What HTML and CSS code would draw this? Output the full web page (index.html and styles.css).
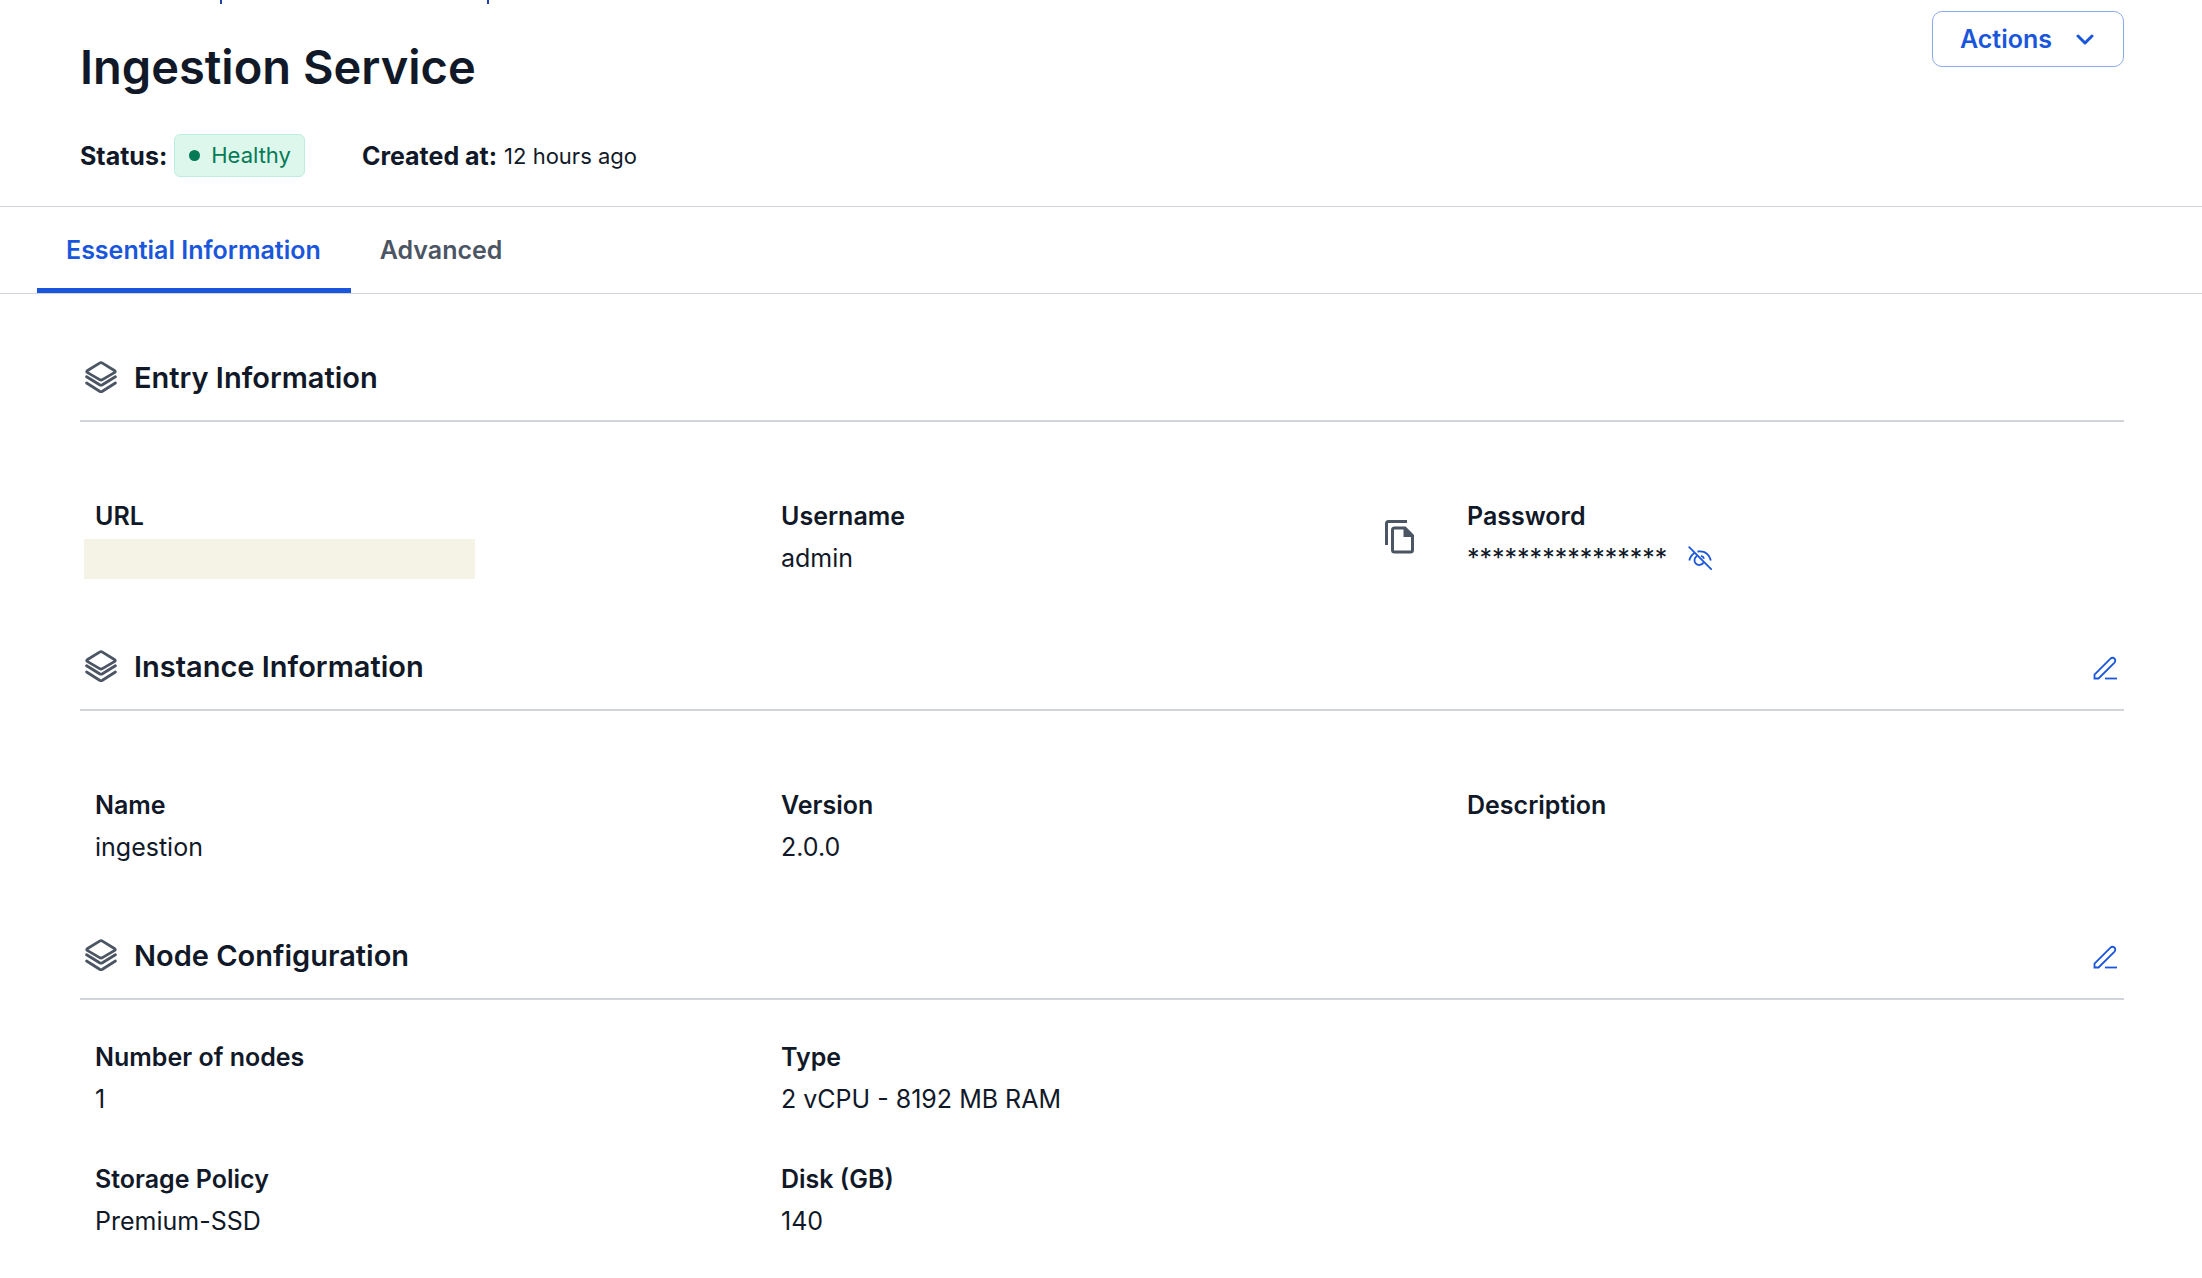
FILE: index.html
```html
<!DOCTYPE html>
<html lang="en">
<head>
    <meta charset="UTF-8">
    <meta name="viewport" content="width=device-width, initial-scale=1.0">
    <title>Ingestion Service</title>
    <link rel="stylesheet" href="styles.css">
</head>
<body>
    <!-- Shared icon shapes -->
    <svg class="icon-defs" aria-hidden="true">
        <symbol id="icon-layers" viewBox="0 0 32 34" fill="none" stroke="currentColor" stroke-width="2.8" stroke-linecap="round" stroke-linejoin="round">
            <path d="M14.6 2.1 2.2 9.8q-1 .8 0 1.6l12.4 7.2q1.4.8 2.8 0l12.4-7.2q1-.8 0-1.6L17.4 2.1q-1.4-.8-2.8 0Z"/>
            <path d="m1.6 15.8 13 8q1.400.8 2.800 0l13-8"/>
            <path d="m1.6 22 13 8.300q1.400.8 2.800 0l13-8.300"/>
        </symbol>
        <symbol id="icon-edit" viewBox="0 0 24 24" fill="none" stroke="currentColor" stroke-width="1.8">
            <path d="M1.5 22.5V18.5L17.5 2.6q2-1.800 4 0 1.600 2 0 4L5.500 22.500Z"/>
            <path d="M12 22.5h12"/>
        </symbol>
    </svg>

    <header class="page-header">
        <nav class="breadcrumb" aria-label="Breadcrumb">
            <span class="crumb-mark"></span>
            <span class="crumb-mark"></span>
        </nav>
        <div class="title-row">
            <h1>Ingestion Service</h1>
            <button type="button" class="actions-btn">
                Actions
                <svg width="18" height="11" viewBox="0 0 18 11" fill="none" stroke="currentColor" stroke-width="3" stroke-linecap="round" stroke-linejoin="round"><path d="m2 2 7 7 7-7"/></svg>
            </button>
        </div>
        <div class="meta-row">
            <div class="meta">
                <strong>Status:</strong>
                <span class="badge"><span class="dot"></span>Healthy</span>
            </div>
            <div class="meta">
                <strong>Created at:</strong>
                <span>12 hours ago</span>
            </div>
        </div>
    </header>

    <nav class="tabs">
        <a href="#essential" class="tab active">Essential Information</a>
        <a href="#advanced" class="tab">Advanced</a>
    </nav>

    <main id="essential">
        <section>
            <div class="section-header">
                <svg class="layers"><use href="#icon-layers"/></svg>
                <h2>Entry Information</h2>
            </div>
            <dl class="fields">
                <div class="field">
                    <dt>URL</dt>
                    <dd class="redacted"></dd>
                </div>
                <div class="field with-copy">
                    <div>
                        <dt>Username</dt>
                        <dd>admin</dd>
                    </div>
                    <button type="button" class="icon-btn copy-btn" aria-label="Copy username">
                        <svg width="30" height="34" viewBox="0 0 30 34" fill="none" stroke="currentColor" stroke-width="3"><path d="M1.5 25V3.5q0-2 2-2H22"/><path d="M9.5 8H20l7.5 7.5V30q0 2-2 2h-16q-2 0-2-2V10q0-2 2-2Z"/><path d="M18.5 8v9H28L19 8Z" fill="currentColor" stroke="none"/></svg>
                    </button>
                </div>
                <div class="field">
                    <dt>Password</dt>
                    <dd class="password">
                        ****************
                        <button type="button" class="icon-btn" aria-label="Show password">
                            <svg width="24" height="24" viewBox="0 0 24 24" fill="none" stroke="currentColor" stroke-width="1.8"><path d="m.7.7 23 23"/><path d="M1.300 14.500Q2.500 9.500 6.500 7"/><path d="M9.500 5.500Q20 4 22.900 14.500"/><path d="M9 10a4.800 4.800 0 1 0 6.500 6.500"/><path d="M13 9.800q2.500.6 3 3"/></svg>
                        </button>
                    </dd>
                </div>
            </dl>
        </section>

        <section>
            <div class="section-header">
                <svg class="layers"><use href="#icon-layers"/></svg>
                <h2>Instance Information</h2>
                <button type="button" class="icon-btn edit-btn" aria-label="Edit instance information">
                    <svg width="24" height="24"><use href="#icon-edit"/></svg>
                </button>
            </div>
            <dl class="fields">
                <div class="field">
                    <dt>Name</dt>
                    <dd>ingestion</dd>
                </div>
                <div class="field">
                    <dt>Version</dt>
                    <dd>2.0.0</dd>
                </div>
                <div class="field">
                    <dt>Description</dt>
                    <dd></dd>
                </div>
            </dl>
        </section>

        <section>
            <div class="section-header">
                <svg class="layers"><use href="#icon-layers"/></svg>
                <h2>Node Configuration</h2>
                <button type="button" class="icon-btn edit-btn" aria-label="Edit node configuration">
                    <svg width="24" height="24"><use href="#icon-edit"/></svg>
                </button>
            </div>
            <dl class="fields compact">
                <div class="field">
                    <dt>Number of nodes</dt>
                    <dd>1</dd>
                </div>
                <div class="field">
                    <dt>Type</dt>
                    <dd>2 vCPU - 8192 MB RAM</dd>
                </div>
                <div class="field new-row">
                    <dt>Storage Policy</dt>
                    <dd>Premium-SSD</dd>
                </div>
                <div class="field">
                    <dt>Disk (GB)</dt>
                    <dd>140</dd>
                </div>
            </dl>
        </section>
    </main>
</body>
</html>
```
FILE: styles.css
```css
* {
    box-sizing: border-box;
}
body {
    margin: 0;
    font-family: Inter, sans-serif;
    font-size: 25px;
    line-height: 42px;
    color: #111928;
    background-color: #fff;
}
h1, h2, dl, dd {
    margin: 0;
}
button {
    font-family: inherit;
    cursor: pointer;
}
svg {
    display: block;
    flex: none;
}
.icon-defs {
    position: absolute;
    width: 0;
    height: 0;
}
.page-header {
    padding: 0 78px 29px 80px;
    border-bottom: 1px solid #d1d5db;
}
.breadcrumb {
    display: flex;
    gap: 265px;
    height: 11px;
    padding-left: 140px;
}
.crumb-mark {
    width: 2px;
    height: 4px;
    background-color: #1e429f;
}
.title-row {
    display: flex;
    justify-content: space-between;
    align-items: flex-start;
}
h1 {
    padding-top: 24px;
    font-size: 47px;
    line-height: 64px;
    font-weight: 600;
}
.actions-btn {
    display: flex;
    align-items: center;
    gap: 24px;
    height: 56px;
    padding: 0 29px 0 27px;
    font-size: 25px;
    font-weight: 600;
    color: #1a56db;
    background-color: #fff;
    border: 1px solid #8daaed;
    border-radius: 10px;
}
.meta-row {
    display: flex;
    gap: 57px;
    padding-top: 35px;
}
.meta {
    display: flex;
    align-items: center;
    gap: 7px;
    font-size: 22px;
}
.meta strong {
    font-size: 25px;
    font-weight: 700;
}
.badge {
    display: flex;
    align-items: center;
    gap: 11px;
    padding: 0 13px 0 14px;
    line-height: 41px;
    color: #057a55;
    background-color: #def7ec;
    border: 1px solid #bcf0da;
    border-radius: 6px;
}
.dot {
    width: 11px;
    height: 11px;
    border-radius: 50%;
    background-color: #057a55;
}
.tabs {
    display: flex;
    padding-left: 37px;
    border-bottom: 1px solid #d1d5db;
}
.tab {
    padding: 22px 30px 17px 29px;
    font-weight: 600;
    color: #4b5563;
    text-decoration: none;
    border-bottom: 5px solid transparent;
}
.tab.active {
    color: #1a56db;
    border-bottom-color: #1a56db;
}
main {
    padding: 44px 78px 0 80px;
}
.section-header {
    display: flex;
    align-items: center;
    height: 84px;
    padding-bottom: 3px;
    border-bottom: 2px solid #d1d5db;
}
.layers {
    width: 32px;
    height: 34px;
    margin: 0 17px 0 5px;
    color: #4b5563;
}
h2 {
    font-size: 29px;
    font-weight: 600;
}
.icon-btn {
    padding: 0;
    border: none;
    background: none;
    color: #1a56db;
}
.edit-btn {
    margin: 2px 7px 0 auto;
}
.fields {
    display: grid;
    grid-template-columns: repeat(3, 1fr);
    margin-right: -14px;
    padding: 73px 0 48px;
}
.field {
    padding-left: 15px;
}
.fields.compact {
    padding-top: 36px;
    row-gap: 38px;
}
.new-row {
    grid-column-start: 1;
}
dt {
    font-weight: 600;
}
.redacted {
    width: 391px;
    height: 40px;
    margin: 2px 0 0 -11px;
    background-color: #f5f3e6;
}
.with-copy {
    display: flex;
    align-items: center;
    justify-content: space-between;
}
.copy-btn {
    margin-right: 37px;
    color: #4b5563;
}
.password {
    display: flex;
    align-items: center;
    gap: 21px;
}
```
